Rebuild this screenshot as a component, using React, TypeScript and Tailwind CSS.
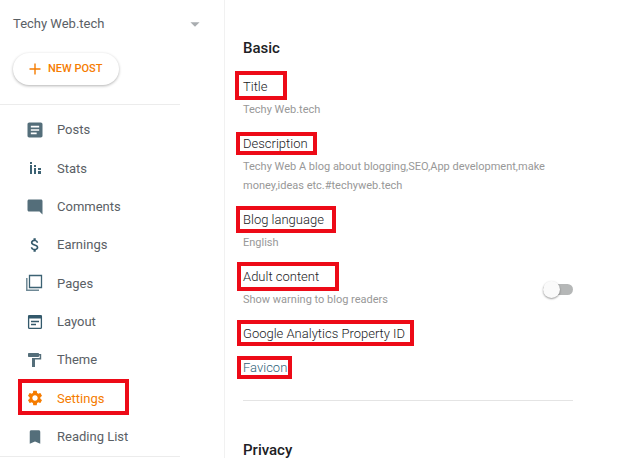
import React, { useState } from "react";
import {
  MdArticle,
  MdArrowDropDown,
  MdAttachMoney,
  MdBookmark,
  MdModeComment,
  MdSettings,
} from "react-icons/md";

const StatsIcon = () => (
  <svg viewBox="0 0 20 20" className="size-5" fill="#3c6273">
    <path d="M5 4h2v2H5zM5 7h2v9H5zM9 7h2v2H9zM9 10h2v6H9zM13 10h3v2h-3zM13 13h3v3h-3z" />
  </svg>
);

const PagesIcon = () => (
  <svg viewBox="0 0 20 20" className="size-5" fill="none">
    <path d="M4.500 2.500h12v12h-12z" stroke="#3c6273" strokeWidth="1.3" />
    <path d="M1.800 5v12.200H14" stroke="#6f8996" strokeWidth="1.5" />
  </svg>
);

const LayoutIcon = () => (
  <svg viewBox="0 0 20 20" className="size-5" fill="none" stroke="#33596b">
    <rect x="3.600" y="3.600" width="12.800" height="12.800" rx="1" strokeWidth="1.3" />
    <path d="M3 5h14" strokeWidth="3" />
    <path d="M6 9.500h8M6 12.500h5" strokeWidth="1.3" />
  </svg>
);

const ThemeIcon = () => (
  <svg viewBox="0 0 20 20" className="size-5" fill="#546e7a">
    <rect x="3" y="3" width="11" height="4" rx="0.7" />
    <path d="M14 4h2.200v5.500H10V17H7V8h7.700V5.500H14z" />
  </svg>
);

const navItems = [
  { name: "Posts", icon: <MdArticle size={20} /> },
  { name: "Stats", icon: <StatsIcon /> },
  { name: "Comments", icon: <MdModeComment size={18} /> },
  { name: "Earnings", icon: <MdAttachMoney size={18} color="#33596b" /> },
  { name: "Pages", icon: <PagesIcon /> },
  { name: "Layout", icon: <LayoutIcon /> },
  { name: "Theme", icon: <ThemeIcon /> },
  { name: "Settings", icon: <MdSettings size={18} />, active: true },
  { name: "Reading List", icon: <MdBookmark size={18} /> },
];

// red marker drawn over a label
const Frame = ({ className }: { className: string }) => (
  <span
    className={`absolute border-4 border-[#ed0a17] pointer-events-none ${className}`}
  />
);

interface RowProps {
  label: string;
  frame: string;
  value?: string;
  link?: boolean;
}

const Row = ({ label, frame, value, link }: RowProps) => (
  <div>
    <div className="relative">
      <button
        className={`font-light ${link ? "text-[#2f5f78]" : "text-[#202124]"}`}
      >
        {label}
      </button>
      <Frame className={frame} />
    </div>
    {value && <p className="mt-1 text-[11px] text-[#989898]">{value}</p>}
  </div>
);

const Sidebar = () => (
  <aside className="w-[225px] shrink-0 border-r border-[#f1f1f1]">
    <button className="flex h-[33px] w-full items-center justify-between pt-[14px] pl-[13px] pr-[18px] text-[13px] leading-[19px] text-[#5a6065]">
      Techy Web.tech
      <MdArrowDropDown size={22} className="text-[#a9adb0]" />
    </button>
    <div className="w-[180px] border-b border-[#ececec] pt-[20px] pb-[19px] pl-[13px]">
      <button className="flex h-8 w-[106px] items-center gap-[7px] rounded-full pl-4 text-[11px] font-medium text-[#f57c00] shadow-[0_1px_3px_rgba(0,0,0,0.3)]">
        <svg viewBox="0 0 12 12" className="size-3" stroke="#f57c00">
          <path d="M6 0.500v11M0.500 6h11" strokeWidth="1.4" />
        </svg>
        NEW POST
      </button>
    </div>
    <nav className="mt-[6px] flex h-[346px] w-[180px] flex-col border-b border-[#ececec]">
      {navItems.map((item) => (
        <a
          key={item.name}
          href="#"
          className={`relative flex flex-1 items-center gap-3 pl-[25px] text-[13px] ${
            item.active ? "text-[#f57c00]" : "text-[#546e7a]"
          }`}
        >
          <span className="flex w-5 justify-center">{item.icon}</span>
          <span className={item.active ? "" : "text-[#5a6065]"}>
            {item.name}
          </span>
          {item.active && <Frame className="left-[18px] top-0 h-9 w-[111px]" />}
        </a>
      ))}
    </nav>
  </aside>
);

const App = () => {
  const [adult, setAdult] = useState(false);
  return (
    <div className="flex h-screen overflow-hidden bg-white font-['Roboto',sans-serif]">
      <Sidebar />
      <main className="flex-1 pl-[18px] pr-[67px] pt-10 text-[13px] leading-[19px]">
        <h2 className="text-[15px] leading-4 font-medium text-[#202124]">
          Basic
        </h2>
        <section className="mt-[21px] flex flex-col gap-[15px] border-b border-[#e4e4e4] pb-[23px]">
          <Row
            label="Title"
            value="Techy Web.tech"
            frame="-left-2 -top-[6px] h-[29px] w-[52px]"
          />
          <Row
            label="Description"
            value="Techy Web A blog about blogging,SEO,App development,make money,ideas etc.#techyweb.tech"
            frame="-left-[7px] -top-[2px] h-[23px] w-[81px]"
          />
          <Row
            label="Blog language"
            value="English"
            frame="-left-[7px] -top-1 h-[27px] w-[100px]"
          />
          <div className="flex items-end justify-between">
            <Row
              label="Adult content"
              value="Show warning to blog readers"
              frame="-left-[6px] -top-[5px] h-[29px] w-[102px]"
            />
            <label className="relative mb-[11px] flex h-[17px] w-[30px] items-center">
              <input
                type="checkbox"
                checked={adult}
                onChange={() => setAdult((pre) => !pre)}
                aria-label="Show warning to blog readers"
                className="peer h-[11px] w-full appearance-none rounded-full bg-[#b5b7b7] checked:bg-[#f9bd80]"
              />
              <span className="absolute left-0 size-[17px] rounded-full bg-[#fafafa] shadow-[0_1px_2px_rgba(0,0,0,0.4)] peer-checked:left-[13px] peer-checked:bg-[#f57c00]" />
            </label>
          </div>
          <Row
            label="Google Analytics Property ID"
            frame="-left-[6px] -top-1 h-[26px] w-[177px]"
          />
          <Row
            label="Favicon"
            link
            frame="-left-[6px] -top-[2px] h-[23px] w-[55px]"
          />
        </section>
        <h2 className="mt-[41px] text-[15px] leading-4 font-medium text-[#202124]">
          Privacy
        </h2>
      </main>
    </div>
  );
};

export default App;
